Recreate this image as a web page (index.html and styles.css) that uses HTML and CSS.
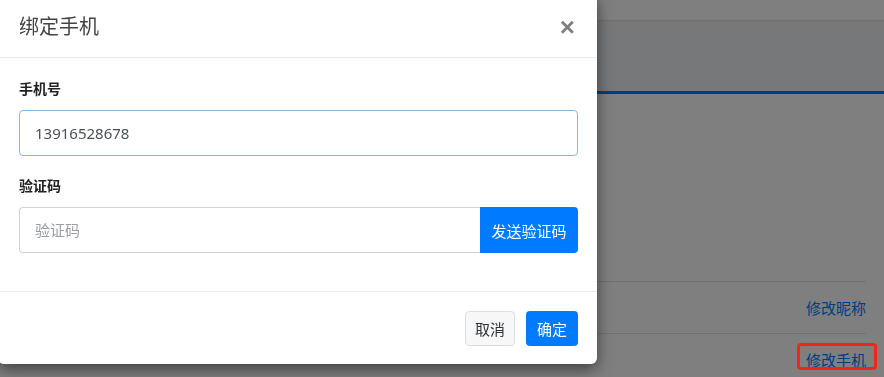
FILE: index.html
```html
<!DOCTYPE html>
<html lang="zh-CN">
<head>
    <meta charset="UTF-8">
    <meta name="viewport" content="width=device-width, initial-scale=1.0">
    <title>绑定手机</title>
    <link rel="stylesheet" href="styles.css">
</head>
<body>
    <div class="page">
        <div class="topbar"></div>
        <div class="tabs"></div>
        <div class="info">
            <div class="info-row">
                <span class="info-label">昵称</span>
                <span class="info-value">user</span>
                <a class="info-link" href="#">修改昵称</a>
            </div>
            <div class="info-row">
                <span class="info-label">手机号</span>
                <span class="info-value">13916528678</span>
                <a class="info-link" href="#">修改手机</a>
            </div>
        </div>
    </div>

    <div class="backdrop"></div>
    <div class="mark"></div>

    <div class="modal">
        <div class="modal-header">
            <h5 class="modal-title">绑定手机</h5>
            <button class="close" type="button">&times;</button>
        </div>
        <div class="modal-body">
            <label class="field-label">手机号</label>
            <input class="field-input field-focus" type="text" value="13916528678">
            <label class="field-label">验证码</label>
            <div class="input-group">
                <input class="field-input" type="text" placeholder="验证码">
                <button class="btn btn-primary btn-append" type="button">发送验证码</button>
            </div>
        </div>
        <div class="modal-footer">
            <button class="btn btn-light btn-cancel" type="button">取消</button>
            <button class="btn btn-primary btn-ok" type="button">确定</button>
        </div>
    </div>
</body>
</html>
```

FILE: styles.css
```css
body {
    margin: 0;
    font-family: "Noto Sans", "Noto Sans CJK SC", sans-serif;
    font-size: 15px;
    color: #212529;
    background-color: #fff;
    height: 377px;
    overflow: hidden;
}
.page {
    position: relative;
}
.topbar {
    height: 20px;
    border-bottom: 1px solid #e0e0e0;
}
.tabs {
    height: 70px;
    background-color: #eef0f2;
    border-bottom: 3px solid #007bff;
}
.info {
    margin: 187px 18px 0 20px;
}
.info-row {
    display: flex;
    align-items: center;
    height: 51px;
    border-top: 1px solid #dee2e6;
}
.info-label {
    width: 140px;
    padding-left: 14px;
    font-size: 14px;
    font-weight: bold;
    margin-top: -10px;
}
.info-value {
    flex: 1;
    font-size: 14px;
    margin-top: -10px;
}
.info-link {
    color: #007bff;
    text-decoration: none;
}
.backdrop {
    position: fixed;
    top: 0;
    left: 0;
    right: 0;
    bottom: 0;
    background-color: rgba(0, 0, 0, 0.5);
}
.mark {
    position: absolute;
    left: 797px;
    top: 343px;
    width: 74px;
    height: 21px;
    border: 3px solid #f0261c;
    border-radius: 4px;
}
.modal {
    position: absolute;
    top: -6px;
    left: -2px;
    width: 599px;
    height: 370px;
    background-color: #fff;
    border-radius: 6px;
    box-shadow: 0 5px 15px rgba(0, 0, 0, 0.5);
    display: flex;
    flex-direction: column;
}
.modal-header {
    display: flex;
    align-items: center;
    justify-content: space-between;
    height: 64px;
    padding: 0 22px 0 22px;
    border-bottom: 1px solid #e9ecef;
    box-sizing: border-box;
}
.modal-title {
    margin: 0 0 0 -1px;
    font-size: 20px;
    font-weight: normal;
    color: #444;
}
.close {
    border: none;
    background: none;
    padding: 0;
    margin-top: 2px;
    font-family: "Liberation Sans", sans-serif;
    font-size: 26px;
    font-weight: bold;
    line-height: 1;
    color: #000;
    opacity: 0.5;
}
.modal-body {
    box-sizing: border-box;
    padding: 20px 19px 0 21px;
    height: 234px;
    border-bottom: 1px solid #e9ecef;
}
.field-label {
    display: block;
    font-size: 14px;
    font-weight: bold;
    color: #222;
    margin-bottom: 12px;
}
.field-input {
    display: block;
    width: 100%;
    height: 46px;
    box-sizing: border-box;
    padding: 0 15px;
    font-family: inherit;
    font-size: 15px;
    color: #495057;
    border: 1px solid #ced4da;
    border-radius: 4px;
    margin-bottom: 19px;
    outline: none;
}
.field-input::placeholder {
    color: #9a9ea2;
}
.field-focus {
    border-color: #86b7de;
}
.input-group {
    display: flex;
}
.input-group .field-input {
    flex: 1;
    border-radius: 4px 0 0 4px;
    border-right: none;
}
.btn {
    font-family: inherit;
    font-size: 15px;
    border: 1px solid transparent;
    border-radius: 4px;
    padding: 0;
    height: 35px;
    cursor: pointer;
}
.btn-primary {
    background-color: #007bff;
    color: #fff;
}
.btn-light {
    background-color: #f6f7f8;
    border-color: #dcdfe2;
    color: #333;
}
.btn-append {
    height: 46px;
    width: 98px;
    border-radius: 0 4px 4px 0;
}
.btn-cancel {
    width: 50px;
}
.btn-ok {
    width: 52px;
}
.modal-footer {
    display: flex;
    justify-content: flex-end;
    gap: 11px;
    padding: 19px 19px 0 0;
}
```
